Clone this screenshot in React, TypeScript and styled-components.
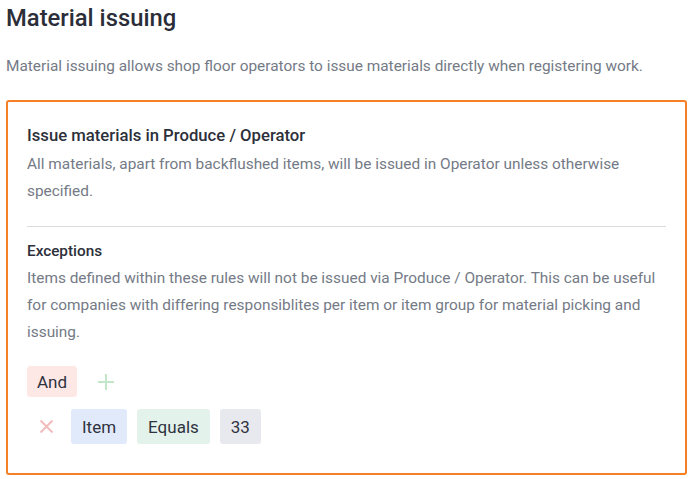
import styled, { createGlobalStyle } from "styled-components";

const GlobalStyle = createGlobalStyle`
  body {
    margin: 0;
    background: #ffffff;
    font-family: Roboto, "Liberation Sans", sans-serif;
    color: #2d303a;
  }
`;

const Page = styled.div`
  padding: 0 6px;
  width: 681px;
`;

const Title = styled.h1`
  font-size: 23.8px;
  font-weight: 500;
  line-height: 36px;
  margin: 0;
  color: #2b2e38;
`;

const Lead = styled.p`
  font-size: 15.4px;
  line-height: 27px;
  margin: 17px 0 20px;
  color: #747a86;
`;

const Card = styled.div`
  border: 2px solid #f58025;
  border-radius: 3px;
  padding: 22px 19px 29px;
`;

const Heading = styled.h2<{ small?: boolean }>`
  font-size: ${(p) => (p.small ? "15.3px" : "16.7px")};
  font-weight: 500;
  line-height: 24px;
  margin: 0 0 ${(p) => (p.small ? "2px" : "3px")};
  color: #2d303a;
`;

const Text = styled.p`
  font-size: 15.4px;
  line-height: 27px;
  margin: 0;
  color: #747a86;
`;

const Divider = styled.hr`
  border: none;
  border-top: 1px solid #dcdcdc;
  margin: 21px 0 12px;
`;

const Rules = styled.div`
  display: flex;
  flex-direction: column;
  gap: 12px;
  margin-top: 20px;
`;

const Row = styled.div<{ indent?: boolean; spread?: number }>`
  display: flex;
  align-items: center;
  gap: ${(p) => p.spread ?? 10}px;
  padding-left: ${(p) => (p.indent ? "4px" : "0")};
`;

const tones = {
  red: "#fde8e6",
  blue: "#e1eafa",
  green: "#e4f2ec",
  grey: "#e8e9ee",
};

const Chip = styled.span<{ tone: keyof typeof tones; compact?: boolean }>`
  display: inline-flex;
  align-items: center;
  height: ${(p) => (p.compact ? "31px" : "35px")};
  padding: 0 ${(p) => (p.compact ? "10px" : "11px")};
  border-radius: 3px;
  font-size: 17px;
  color: #2f3340;
  background: ${(p) => tones[p.tone]};
`;

const IconButton = styled.button`
  border: none;
  background: none;
  padding: 0;
  width: 30px;
  height: 30px;
  display: inline-flex;
  align-items: center;
  justify-content: center;
  cursor: pointer;
`;

function PlusIcon() {
  return (
    <svg width="18" height="18" viewBox="0 0 18 18">
      <path d="M9 1v16M1 9h16" stroke="#c4e6c8" strokeWidth="2" />
    </svg>
  );
}

function CrossIcon() {
  return (
    <svg width="15" height="15" viewBox="0 0 15 15">
      <path d="M1.5 1.5l12 12M13.5 1.5l-12 12" stroke="#f3bcbc" strokeWidth="2" />
    </svg>
  );
}

function App() {
  return (
    <Page>
      <GlobalStyle />
      <Title>Material issuing</Title>
      <Lead>
        Material issuing allows shop floor operators to issue materials
        directly when registering work.
      </Lead>
      <Card>
        <Heading>Issue materials in Produce / Operator</Heading>
        <Text>
          All materials, apart from backflushed items, will be issued in
          Operator unless otherwise specified.
        </Text>
        <Divider />
        <Heading small>Exceptions</Heading>
        <Text>
          Items defined within these rules will not be issued via Produce /
          Operator. This can be useful for companies with differing
          responsiblites per item or item group for material picking and
          issuing.
        </Text>
        <Rules>
          <Row spread={14}>
            <Chip tone="red" compact>
              And
            </Chip>
            <IconButton>
              <PlusIcon />
            </IconButton>
          </Row>
          <Row indent>
            <IconButton>
              <CrossIcon />
            </IconButton>
            <Chip tone="blue">Item</Chip>
            <Chip tone="green">Equals</Chip>
            <Chip tone="grey">33</Chip>
          </Row>
        </Rules>
      </Card>
    </Page>
  );
}

export default App;
